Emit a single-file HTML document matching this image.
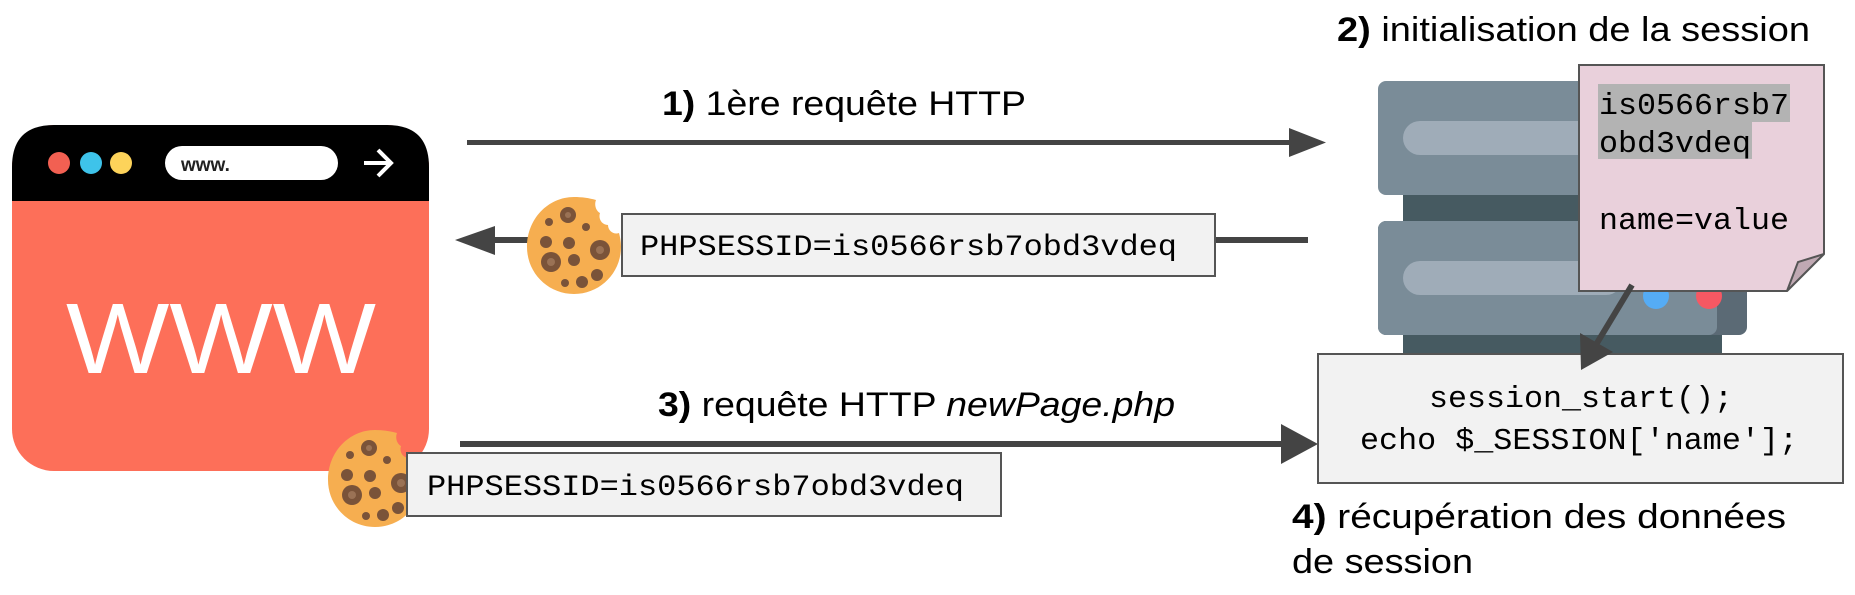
<!DOCTYPE html>
<html><head><meta charset="utf-8"><style>
html,body{margin:0;padding:0;background:#fff;width:1855px;height:595px;overflow:hidden}
svg{display:block}
.s{font-family:"Liberation Sans",sans-serif;font-size:34px;fill:#000}
.m{font-family:"Liberation Mono",monospace;fill:#000}
</style></head><body>
<svg width="1855" height="595" viewBox="0 0 1855 595" xmlns="http://www.w3.org/2000/svg">
<defs>
<g id="cookie">
<path d="M0,-48 C-26,-48 -47,-26 -47,2 C-47,28 -26,49 0,49 C26,49 47,28 47,2 C47,-4 46,-8 45,-12 C40,-10 34,-14 34,-20 C28,-20 24,-26 26,-32 C22,-34 20,-40 22,-45 C15,-47 8,-48 0,-48 Z" fill="#F6AE50"/>
<circle cx="-6" cy="-30" r="8" fill="#7A5339"/><circle cx="-6" cy="-30" r="3" fill="#9a7255"/>
<circle cx="-25" cy="-23" r="4" fill="#7A5339"/>
<circle cx="12" cy="-18" r="4" fill="#7A5339"/>
<circle cx="-28" cy="-3" r="6" fill="#7A5339"/>
<circle cx="-5" cy="-2" r="6" fill="#7A5339"/>
<circle cx="26" cy="5" r="10" fill="#7A5339"/><circle cx="26" cy="5" r="4" fill="#9a7255"/>
<circle cx="-23" cy="17" r="10" fill="#7A5339"/><circle cx="-23" cy="17" r="4" fill="#9a7255"/>
<circle cx="0" cy="15" r="6" fill="#7A5339"/>
<circle cx="8" cy="37" r="6" fill="#7A5339"/>
<circle cx="-9" cy="38" r="4" fill="#7A5339"/>
<circle cx="23" cy="30" r="6" fill="#7A5339"/>
</g>
</defs>

<!-- Browser -->
<rect x="12" y="125" width="417" height="346" rx="42" fill="#FD6F59"/>
<path d="M12,201 L12,167 Q12,125 54,125 L387,125 Q429,125 429,167 L429,201 Z" fill="#000"/>
<circle cx="59" cy="163" r="11" fill="#F26052"/>
<circle cx="91" cy="163" r="11" fill="#3EC3EA"/>
<circle cx="121" cy="163" r="11" fill="#FDD35A"/>
<rect x="165" y="146" width="173" height="34" rx="17" fill="#fff"/>
<text x="181" y="171" font-family="Liberation Sans,sans-serif" font-size="19" fill="#222" font-weight="bold">www.</text>
<path d="M364,163 H390 M378,150 L391,163 L378,176" stroke="#fff" stroke-width="4" fill="none"/>
<text x="66" y="373" textLength="310" lengthAdjust="spacingAndGlyphs" font-family="Liberation Sans,sans-serif" font-size="100" fill="#fff">WWW</text>

<!-- Arrow 1 -->
<rect x="467" y="140" width="824" height="5" fill="#444"/>
<path d="M1289,128 L1326,142.5 L1289,157 Z" fill="#444"/>
<text class="s" x="662" y="115" textLength="364" lengthAdjust="spacingAndGlyphs"><tspan font-weight="bold">1)</tspan> 1ère requête HTTP</text>

<!-- Arrow 2 -->
<rect x="490" y="237" width="40" height="6" fill="#444"/>
<path d="M495,226 L455,240 L495,255 Z" fill="#444"/>
<rect x="1215" y="237" width="93" height="6" fill="#444"/>
<use href="#cookie" transform="translate(574,245)"/>
<rect x="622" y="214" width="593" height="62" fill="#F2F2F2" stroke="#555" stroke-width="2"/>
<text class="m" x="640" y="255" font-size="30" textLength="537" lengthAdjust="spacingAndGlyphs">PHPSESSID=is0566rsb7obd3vdeq</text>

<!-- Arrow 3 -->
<rect x="460" y="441" width="822" height="6" fill="#444"/>
<path d="M1281,424 L1318,444 L1281,464 Z" fill="#444"/>
<text class="s" x="658" y="416" textLength="517" lengthAdjust="spacingAndGlyphs"><tspan font-weight="bold">3)</tspan> requête HTTP <tspan font-style="italic">newPage.php</tspan></text>
<use href="#cookie" transform="translate(375,478)"/>
<rect x="407" y="453" width="594" height="63" fill="#F2F2F2" stroke="#555" stroke-width="2"/>
<text class="m" x="427" y="495" font-size="30" textLength="537" lengthAdjust="spacingAndGlyphs">PHPSESSID=is0566rsb7obd3vdeq</text>

<!-- Server -->
<rect x="1403" y="180" width="319" height="200" fill="#465A61"/>
<rect x="1378" y="81" width="369" height="114" rx="8" fill="#7A8C98"/>
<rect x="1403" y="121" width="220" height="34" rx="17" fill="#9FACB8"/>
<rect x="1378" y="221" width="369" height="114" rx="8" fill="#5B6A75"/>
<rect x="1378" y="221" width="339" height="114" rx="8" fill="#7A8C98"/>
<rect x="1403" y="261" width="220" height="34" rx="17" fill="#9FACB8"/>
<circle cx="1656" cy="296" r="13" fill="#55ACF5"/>
<circle cx="1709" cy="296" r="13" fill="#F65863"/>

<!-- Note -->
<path d="M1579,65 L1824,65 L1824,254 L1787,291 L1579,291 Z" fill="#E9D0DB" stroke="#555" stroke-width="2"/>
<path d="M1824,254 L1798,262 L1787,291 Z" fill="#C0A9B3" stroke="#555" stroke-width="2"/>
<rect x="1598" y="84" width="192" height="38" fill="#B3B3B3"/>
<rect x="1598" y="122" width="154" height="37" fill="#B3B3B3"/>
<text class="m" font-size="31" x="1599" y="114" textLength="190" lengthAdjust="spacingAndGlyphs">is0566rsb7</text>
<text class="m" font-size="31" x="1599" y="152" textLength="152" lengthAdjust="spacingAndGlyphs">obd3vdeq</text>
<text class="m" font-size="31" x="1599" y="229" textLength="190" lengthAdjust="spacingAndGlyphs">name=value</text>

<!-- Code box -->
<rect x="1318" y="354" width="525" height="129" fill="#F2F2F2" stroke="#555" stroke-width="2"/>
<text class="m" font-size="31" x="1429" y="407" textLength="304" lengthAdjust="spacingAndGlyphs">session_start();</text>
<text class="m" font-size="31" x="1360" y="449" textLength="438" lengthAdjust="spacingAndGlyphs">echo $_SESSION['name'];</text>

<!-- note -> box arrow -->
<line x1="1632" y1="285" x2="1594" y2="348" stroke="#444" stroke-width="6"/>
<path d="M1581,370 L1580,333 L1613,352 Z" fill="#444"/>

<text class="s" x="1337" y="41" textLength="473" lengthAdjust="spacingAndGlyphs"><tspan font-weight="bold">2)</tspan> initialisation de la session</text>
<text class="s" x="1292" y="528" textLength="494" lengthAdjust="spacingAndGlyphs"><tspan font-weight="bold">4)</tspan> récupération des données</text>
<text class="s" x="1292" y="573" textLength="181" lengthAdjust="spacingAndGlyphs">de session</text>
</svg>
</body></html>
